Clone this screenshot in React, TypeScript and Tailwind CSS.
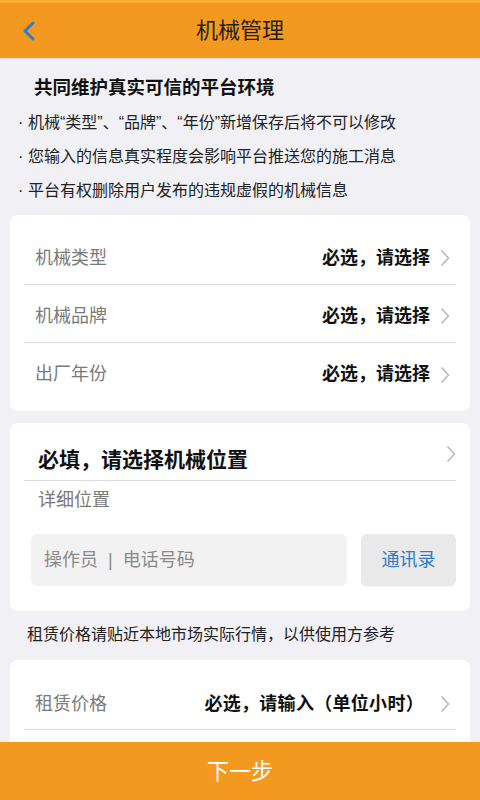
import React from "react";

const font = { fontFamily: '"Liberation Sans", "Noto Sans CJK SC", sans-serif' };

const Chevron = ({ className = "" }: { className?: string }) => (
  <svg width="10" height="18" viewBox="0 0 10 18" className={className}>
    <polyline points="1.5,1.5 8.5,9 1.5,16.5" fill="none" stroke="#b4b4b8" strokeWidth="1.4" />
  </svg>
);

const SelectRow = ({ label, value, last }: { label: string; value: string; last?: boolean }) => (
  <div className={`flex h-[58px] items-center justify-between pl-[11px] pr-[6px] pt-[5px] ${last ? "" : "border-b border-[#dcdcdf]"}`}>
    <span className="text-[18px] text-[#7a7a7a]">{label}</span>
    <div className="flex items-center gap-[10px]">
      <span className="text-[18px] font-bold text-[#111]">{value}</span>
      <Chevron />
    </div>
  </div>
);

const tips = [
  "机械“类型”、“品牌”、“年份”新增保存后将不可以修改",
  "您输入的信息真实程度会影响平台推送您的施工消息",
  "平台有权删除用户发布的违规虚假的机械信息",
];

export default function App() {
  return (
    <div className="min-h-screen bg-[#f0f0f5] pb-[80px]" style={font}>
      {/* header */}
      <div className="relative flex h-[58px] items-center justify-center border-t-[3px] border-[#fbb02e] bg-[#f4991f] shadow-[0_1px_2px_rgba(0,0,0,0.08)]">
        <svg width="14" height="20" viewBox="0 0 14 20" className="absolute left-[22px] top-[18px]">
          <polyline points="11,2 3,10 11,18" fill="none" stroke="#2e7bcf" strokeWidth="3" strokeLinecap="round" strokeLinejoin="round" />
        </svg>
        <h1 className="text-[22px] text-[#1e1e1e]">机械管理</h1>
      </div>

      {/* notice */}
      <div className="pt-[17px]">
        <h2 className="pl-[34px] text-[18.5px] font-bold leading-[26px] text-[#111]">共同维护真实可信的平台环境</h2>
        <ul className="mt-[5px]">
          {tips.map((t) => (
            <li key={t} className="flex h-[34px] items-center pl-[18px] text-[16px] text-[#222]">
              <span className="w-[10px]">·</span>
              <span>{t}</span>
            </li>
          ))}
        </ul>
      </div>

      {/* basic info */}
      <div className="mx-[10px] mt-[7px] rounded-lg bg-white px-[14px] pb-[10px] pt-[12px]">
        <SelectRow label="机械类型" value="必选，请选择" />
        <SelectRow label="机械品牌" value="必选，请选择" />
        <SelectRow label="出厂年份" value="必选，请选择" last />
      </div>

      {/* location */}
      <div className="mx-[10px] mt-[12px] rounded-lg bg-white px-[14px] pb-[25px] pt-[14px]">
        <div className="flex h-[44px] items-center justify-between border-b border-[#dcdcdf] pl-[14px] pt-[3px]">
          <span className="text-[21px] font-bold text-[#111]">必填，请选择机械位置</span>
          <Chevron className="mb-[12px]" />
        </div>
        <div className="flex h-[38px] items-center pl-[14px] text-[18px] text-[#7a7a7a]">详细位置</div>
        <div className="mt-[15px] flex h-[52px] gap-[14px] pl-[7px]">
          <div className="flex flex-1 items-center rounded-md bg-[#f2f2f3] pl-[13px] text-[18px] text-[#8a8a8a]">
            操作员 &nbsp;|&nbsp; 电话号码
          </div>
          <button className="flex w-[95px] items-center justify-center rounded-md bg-[#e9e9ea] text-[18px] text-[#2a7ccd] shadow-[0_1px_1px_rgba(0,0,0,0.05)]">
            通讯录
          </button>
        </div>
      </div>

      <p className="mt-[12px] pl-[27px] text-[16px] leading-[24px] text-[#222]">租赁价格请贴近本地市场实际行情，以供使用方参考</p>

      {/* price */}
      <div className="mx-[10px] mt-[13px] rounded-lg bg-white px-[14px] pb-[10px] pt-[14px]">
        <div className="flex h-[56px] items-center justify-between border-b border-[#dcdcdf] pl-[11px] pr-[6px] pt-[5px]">
          <span className="text-[18px] text-[#7a7a7a]">租赁价格</span>
          <div className="flex items-center gap-[16px]">
            <span className="text-[18px] font-bold tracking-[0.3px] text-[#111]">必选，请输入（单位小时）</span>
            <Chevron />
          </div>
        </div>
        <SelectRow label="机械描述" value="选填，请输入" last />
      </div>

      {/* bottom action */}
      <button className="fixed bottom-0 left-0 right-0 flex h-[58px] items-center justify-center bg-[#f4991f] text-[22px] text-white">
        下一步
      </button>
    </div>
  );
}
